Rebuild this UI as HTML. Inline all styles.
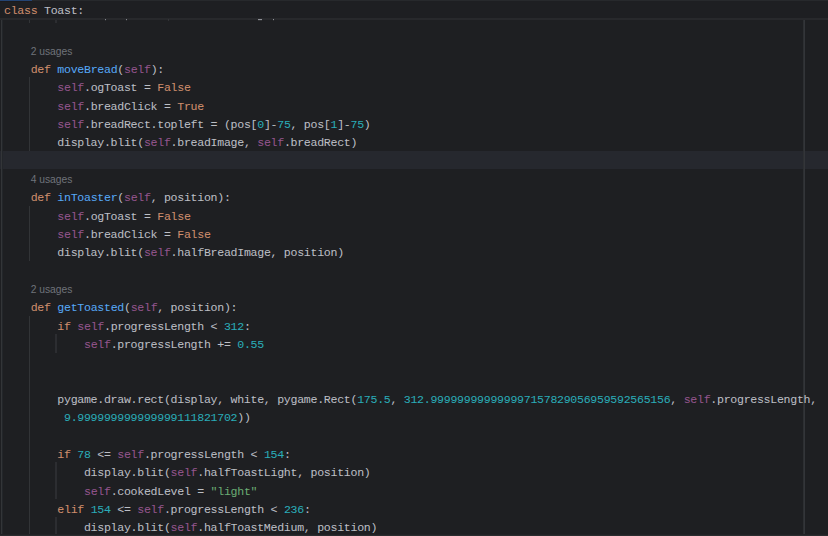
<!DOCTYPE html>
<html lang="en">
<head>
<meta charset="utf-8">
<title>Toast editor</title>
<style>
html,body{margin:0;padding:0;background:#1e1f22;}
body{width:828px;height:536px;overflow:hidden;position:relative;}
#ed{position:absolute;left:0;top:0;width:828px;height:536px;overflow:hidden;background:#1e1f22;}
.ln{position:absolute;left:4.0px;height:17px;line-height:17px;white-space:pre;font-family:"Liberation Mono", "DejaVu Sans Mono", monospace;font-size:11.6px;letter-spacing:-0.2944px;color:#bcbec4;-webkit-text-stroke:0.05px;font-kerning:none;font-variant-ligatures:none;}
.hint{position:absolute;height:17px;line-height:17px;white-space:pre;font-family:"Liberation Sans", "DejaVu Sans", sans-serif;font-size:10.3px;color:#6f737a;}
.k{color:#cf8e6d}.f{color:#56a8f5}.s{color:#94558d}.n{color:#2aacb8}.t{color:#6aab73}
.caret{position:absolute;left:0;width:828px;background:#26282e;}
.g{position:absolute;width:1px;background:#313438;}
.dot{position:absolute;top:19px;height:1px;box-shadow:0 1px 0 rgba(188,190,196,0.12);}
.margin{position:absolute;left:803px;top:19px;width:1px;height:517px;background:#2d2f32;border-right:1px solid #333539;}
#sticky{position:absolute;left:0;top:0;width:828px;height:18px;background:#1e1f22;border-bottom:2px solid #28292c;}
#bottomline{position:absolute;left:0;top:534px;width:828px;height:1px;background:#212225;border-bottom:1px solid #2a2c2f;}
#topline{position:absolute;left:0;top:0;width:828px;height:1px;background:#27292c;}
#tab{position:absolute;left:0;top:0;width:32px;height:1px;background:#244473;border-bottom:1px solid #1c1b1d;}

</style>
</head>
<body>
<div id="ed">
<div class="caret" style="top:151px;height:18px"></div>
<div class="g" style="left:1px;top:19px;height:517px;background:#333538;border-right:1px solid #23262a"></div>
<div class="g" style="left:29px;top:20px;height:3px;width:1px;background:#323437"></div>
<div class="g" style="left:55px;top:20px;height:3px;width:2px;background:#2c2d31"></div>
<div class="g" style="left:29px;width:1px;background:#323437;top:77px;height:74px"></div>
<div class="g" style="left:29px;width:1px;background:#323437;top:206px;height:55px"></div>
<div class="g" style="left:29px;width:1px;background:#323437;top:316px;height:220px"></div>
<div class="g" style="left:55px;width:2px;background:#2c2d31;top:334px;height:19px"></div>
<div class="g" style="left:55px;width:2px;background:#2c2d31;top:462px;height:37px"></div>
<div class="g" style="left:55px;width:2px;background:#2c2d31;top:517px;height:19px"></div>
<div class="margin"></div>
<div class="hint" style="left:30.67px;top:43px">2 usages</div>
<div class="ln" style="top:61px">    <span class="k">def</span> <span class="f">moveBread</span>(<span class="s">self</span>):</div>
<div class="ln" style="top:79px">        <span class="s">self</span>.ogToast = <span class="k">False</span></div>
<div class="ln" style="top:98px">        <span class="s">self</span>.breadClick = <span class="k">True</span></div>
<div class="ln" style="top:116px">        <span class="s">self</span>.breadRect.topleft = (pos[<span class="n">0</span>]-<span class="n">75</span>, pos[<span class="n">1</span>]-<span class="n">75</span>)</div>
<div class="ln" style="top:134px">        display.blit(<span class="s">self</span>.breadImage, <span class="s">self</span>.breadRect)</div>
<div class="hint" style="left:30.67px;top:171px">4 usages</div>
<div class="ln" style="top:189px">    <span class="k">def</span> <span class="f">inToaster</span>(<span class="s">self</span>, position):</div>
<div class="ln" style="top:208px">        <span class="s">self</span>.ogToast = <span class="k">False</span></div>
<div class="ln" style="top:226px">        <span class="s">self</span>.breadClick = <span class="k">False</span></div>
<div class="ln" style="top:244px">        display.blit(<span class="s">self</span>.halfBreadImage, position)</div>
<div class="hint" style="left:30.67px;top:281px">2 usages</div>
<div class="ln" style="top:299px">    <span class="k">def</span> <span class="f">getToasted</span>(<span class="s">self</span>, position):</div>
<div class="ln" style="top:318px">        <span class="k">if</span> <span class="s">self</span>.progressLength &lt; <span class="n">312</span>:</div>
<div class="ln" style="top:336px">            <span class="s">self</span>.progressLength += <span class="n">0.55</span></div>
<div class="ln" style="top:391px">        pygame.draw.rect(display, white, pygame.Rect(<span class="n">175.5</span>, <span class="n">312.999999999999997157829056959592565156</span>, <span class="s">self</span>.progressLength,</div>
<div class="ln" style="top:409px">         <span class="n">9.999999999999999111821702</span>))</div>
<div class="ln" style="top:446px">        <span class="k">if</span> <span class="n">78</span> &lt;= <span class="s">self</span>.progressLength &lt; <span class="n">154</span>:</div>
<div class="ln" style="top:464px">            display.blit(<span class="s">self</span>.halfToastLight, position)</div>
<div class="ln" style="top:483px">            <span class="s">self</span>.cookedLevel = <span class="t">"light"</span></div>
<div class="ln" style="top:501px">        <span class="k">elif</span> <span class="n">154</span> &lt;= <span class="s">self</span>.progressLength &lt; <span class="n">236</span>:</div>
<div class="ln" style="top:519px">            display.blit(<span class="s">self</span>.halfToastMedium, position)</div>
<div id="sticky"><div class="ln" style="top:2px"><span class="k">class</span> Toast:</div></div>
<div class="dot" style="left:105px;width:1px;background:#85878d"></div>
<div class="dot" style="left:126px;width:1px;background:#85878d"></div>
<div class="dot" style="left:168px;width:1px;background:#35363a"></div>
<div class="dot" style="left:258px;width:4px;background:#909298"></div>
<div class="dot" style="left:273px;width:1px;background:#909298"></div>
<div id="bottomline"></div>
<div id="topline"></div><div id="tab"></div>
</div>
</body>
</html>
